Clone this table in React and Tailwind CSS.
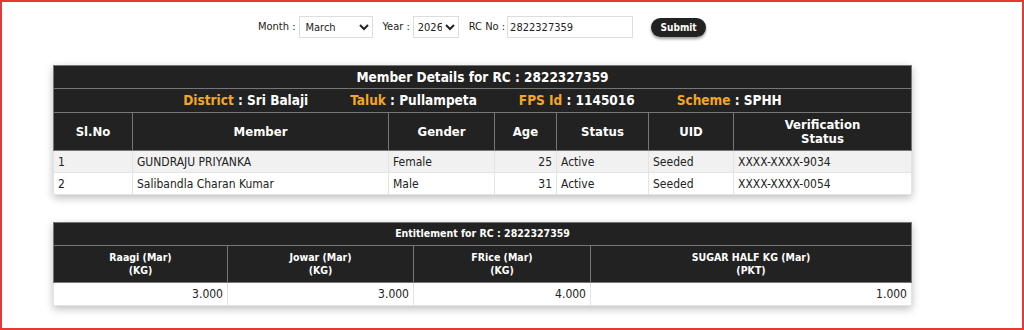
import React from 'react';

const members = [
  { sl: 1, name: 'GUNDRAJU PRIYANKA', gender: 'Female', age: 25, status: 'Active', uid: 'Seeded', ver: 'XXXX-XXXX-9034' },
  { sl: 2, name: 'Salibandla Charan Kumar', gender: 'Male', age: 31, status: 'Active', uid: 'Seeded', ver: 'XXXX-XXXX-0054' },
];

const ent = [
  { name: 'Raagi (Mar)', unit: '(KG)', qty: '3.000', w: 'w-[174px]' },
  { name: 'Jowar (Mar)', unit: '(KG)', qty: '3.000', w: 'w-[186px]' },
  { name: 'FRice (Mar)', unit: '(KG)', qty: '4.000', w: 'w-[177px]' },
  { name: 'SUGAR HALF KG (Mar)', unit: '(PKT)', qty: '1.000', w: '' },
];

function App() {
  return (
    <div
      className="h-[330px] w-[1024px] border-2 border-[#e53935] bg-white text-[#222]"
      style={{ fontFamily: '"DejaVu Sans Condensed", "DejaVu Sans", sans-serif' }}
    >
      {/* search form */}
      <div className="flex items-center h-[50px] pl-[256px] text-[11px]">
        <span className="mr-[3px]">Month :</span>
        <select className="h-[22px] w-[74px] border border-[#ddd] px-[2px] text-[11px]" defaultValue="March">
          <option>March</option>
        </select>
        <span className="ml-[10px] mr-[3px]">Year :</span>
        <select className="h-[22px] w-[46px] border border-[#ddd] px-0 text-[11px]" defaultValue="2026">
          <option>2026</option>
        </select>
        <span className="ml-[10px] mr-[2px]">RC No :</span>
        <input
          className="h-[22px] w-[126px] border border-[#ddd] px-[2px] text-[11px]"
          defaultValue="2822327359"
        />
        <button className="ml-[18px] h-[19px] w-[55px] rounded-full bg-[#222] text-white text-[10px] font-bold shadow-[0_2px_3px_rgba(0,0,0,0.4)]">
          Submit
        </button>
      </div>

      {/* member details */}
      <div className="mt-[13px] ml-[51px] w-[859px] shadow-[0_3px_8px_rgba(0,0,0,0.25)]">
        <table className="w-full border-collapse text-[12px]">
          <thead className="bg-[#222] text-white">
            <tr>
              <th colSpan={7} className="h-[23px] border border-[#777] text-[13.5px] font-bold">
                Member Details for RC : 2822327359
              </th>
            </tr>
            <tr>
              <th colSpan={7} className="h-[24px] border border-[#777] text-[13.5px] font-bold">
                <span className="text-[#f5a623]">District</span> : Sri Balaji
                <span className="ml-[42px] text-[#f5a623]">Taluk</span> : Pullampeta
                <span className="ml-[42px] text-[#f5a623]">FPS Id</span> : 1145016
                <span className="ml-[42px] text-[#f5a623]">Scheme</span> : SPHH
              </th>
            </tr>
            <tr className="text-[13px] font-bold leading-[14px]">
              <th className="h-[38px] w-[79px] border border-[#777]">Sl.No</th>
              <th className="w-[256px] border border-[#777]">Member</th>
              <th className="w-[106px] border border-[#777]">Gender</th>
              <th className="w-[62px] border border-[#777]">Age</th>
              <th className="w-[92px] border border-[#777]">Status</th>
              <th className="w-[85px] border border-[#777]">UID</th>
              <th className="border border-[#777]">
                Verification
                <br />
                Status
              </th>
            </tr>
          </thead>
          <tbody>
            {members.map((m, i) => (
              <tr key={m.sl} className={i === 0 ? 'bg-[#f1f1f1]' : 'bg-white'}>
                <td className="h-[22px] border border-[#e4e4e4] px-[4px]">{m.sl}</td>
                <td className="border border-[#e4e4e4] px-[4px]">{m.name}</td>
                <td className="border border-[#e4e4e4] px-[4px]">{m.gender}</td>
                <td className="border border-[#e4e4e4] px-[4px] text-right">{m.age}</td>
                <td className="border border-[#e4e4e4] px-[4px]">{m.status}</td>
                <td className="border border-[#e4e4e4] px-[4px]">{m.uid}</td>
                <td className="border border-[#e4e4e4] px-[4px]">{m.ver}</td>
              </tr>
            ))}
          </tbody>
        </table>
      </div>

      {/* entitlement */}
      <div className="mt-[27px] ml-[51px] w-[859px] shadow-[0_3px_8px_rgba(0,0,0,0.25)]">
        <table className="w-full border-collapse text-[10.5px]">
          <thead className="bg-[#222] text-white">
            <tr>
              <th colSpan={4} className="h-[23px] border border-[#777] font-bold">
                Entitlement for RC : 2822327359
              </th>
            </tr>
            <tr className="leading-[13px] font-bold">
              {ent.map((e) => (
                <th key={e.name} className={`h-[37px] border border-[#777] ${e.w}`}>
                  {e.name}
                  <br />
                  {e.unit}
                </th>
              ))}
            </tr>
          </thead>
          <tbody>
            <tr className="bg-white">
              {ent.map((e) => (
                <td key={e.name} className="h-[23px] border border-[#e4e4e4] px-[4px] text-right text-[12px]">
                  {e.qty}
                </td>
              ))}
            </tr>
          </tbody>
        </table>
      </div>
    </div>
  );
}

export default App;
